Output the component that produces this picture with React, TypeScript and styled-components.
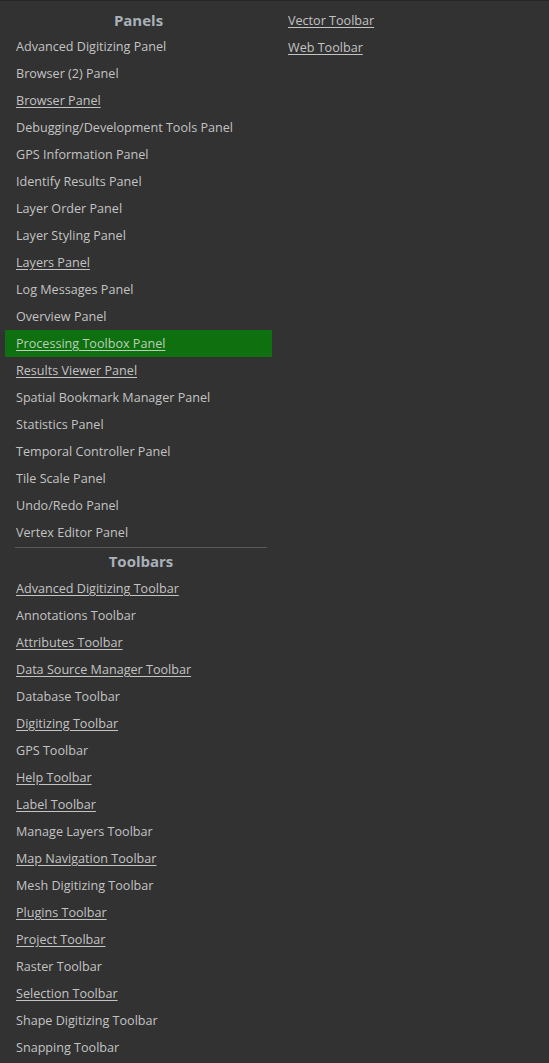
import React from 'react';
import styled, { createGlobalStyle } from 'styled-components';

interface MenuEntry {
  label: string;
  linked?: boolean;
  active?: boolean;
}

const panels: MenuEntry[] = [
  { label: 'Advanced Digitizing Panel' },
  { label: 'Browser (2) Panel' },
  { label: 'Browser Panel', linked: true },
  { label: 'Debugging/Development Tools Panel' },
  { label: 'GPS Information Panel' },
  { label: 'Identify Results Panel' },
  { label: 'Layer Order Panel' },
  { label: 'Layer Styling Panel' },
  { label: 'Layers Panel', linked: true },
  { label: 'Log Messages Panel' },
  { label: 'Overview Panel' },
  { label: 'Processing Toolbox Panel', linked: true, active: true },
  { label: 'Results Viewer Panel', linked: true },
  { label: 'Spatial Bookmark Manager Panel' },
  { label: 'Statistics Panel' },
  { label: 'Temporal Controller Panel' },
  { label: 'Tile Scale Panel' },
  { label: 'Undo/Redo Panel' },
  { label: 'Vertex Editor Panel' },
];

const toolbars: MenuEntry[] = [
  { label: 'Advanced Digitizing Toolbar', linked: true },
  { label: 'Annotations Toolbar' },
  { label: 'Attributes Toolbar', linked: true },
  { label: 'Data Source Manager Toolbar', linked: true },
  { label: 'Database Toolbar' },
  { label: 'Digitizing Toolbar', linked: true },
  { label: 'GPS Toolbar' },
  { label: 'Help Toolbar', linked: true },
  { label: 'Label Toolbar', linked: true },
  { label: 'Manage Layers Toolbar' },
  { label: 'Map Navigation Toolbar', linked: true },
  { label: 'Mesh Digitizing Toolbar' },
  { label: 'Plugins Toolbar', linked: true },
  { label: 'Project Toolbar', linked: true },
  { label: 'Raster Toolbar' },
  { label: 'Selection Toolbar', linked: true },
  { label: 'Shape Digitizing Toolbar' },
  { label: 'Snapping Toolbar' },
];

const moreToolbars: MenuEntry[] = [
  { label: 'Vector Toolbar', linked: true },
  { label: 'Web Toolbar', linked: true },
];

const GlobalStyle = createGlobalStyle`
  html, body {
    margin: 0;
    padding: 0;
    background: #323232;
  }
  body {
    font-family: "Open Sans", "Noto Sans", sans-serif;
    min-height: 1063px;
  }
`;

const Menu = styled.div`
  display: flex;
  align-items: flex-start;
  gap: 5px;
  border-top: 1px solid #262626;
  padding: 6px 0 0 5px;
  min-height: 1056px;
  box-sizing: border-box;
`;

const Column = styled.div<{ $width?: number }>`
  display: flex;
  flex-direction: column;
  width: ${p => (p.$width ? `${p.$width}px` : 'auto')};
`;

const SectionTitle = styled.div<{ $divided?: boolean }>`
  height: ${p => (p.$divided ? '27px' : '26px')};
  line-height: ${p => (p.$divided ? '27px' : '26px')};
  text-align: center;
  font-size: 15px;
  font-weight: 700;
  color: #a9b1b9;
  border-top: ${p => (p.$divided ? '1px solid #595959' : 'none')};
  margin: ${p => (p.$divided ? '1px 5px 0 10px' : '0')};
`;

const Item = styled.div<{ $linked?: boolean; $active?: boolean }>`
  height: 27px;
  line-height: 27px;
  padding-left: 11px;
  font-size: 12.6px;
  white-space: nowrap;
  color: ${p => (p.$active ? '#b9cfb9' : '#c3c3c3')};
  background: ${p => (p.$active ? '#0f700f' : 'transparent')};
  text-decoration: ${p => (p.$linked ? 'underline' : 'none')};
  text-underline-offset: 2px;
`;

const renderItems = (entries: MenuEntry[]) =>
  entries.map(e => (
    <Item key={e.label} $linked={e.linked} $active={e.active}>
      {e.label}
    </Item>
  ));

export default function App() {
  return (
    <>
      <GlobalStyle />
      <Menu>
        <Column $width={267}>
          <SectionTitle>Panels</SectionTitle>
          {renderItems(panels)}
          <SectionTitle $divided>Toolbars</SectionTitle>
          {renderItems(toolbars)}
        </Column>
        <Column>{renderItems(moreToolbars)}</Column>
      </Menu>
    </>
  );
}
